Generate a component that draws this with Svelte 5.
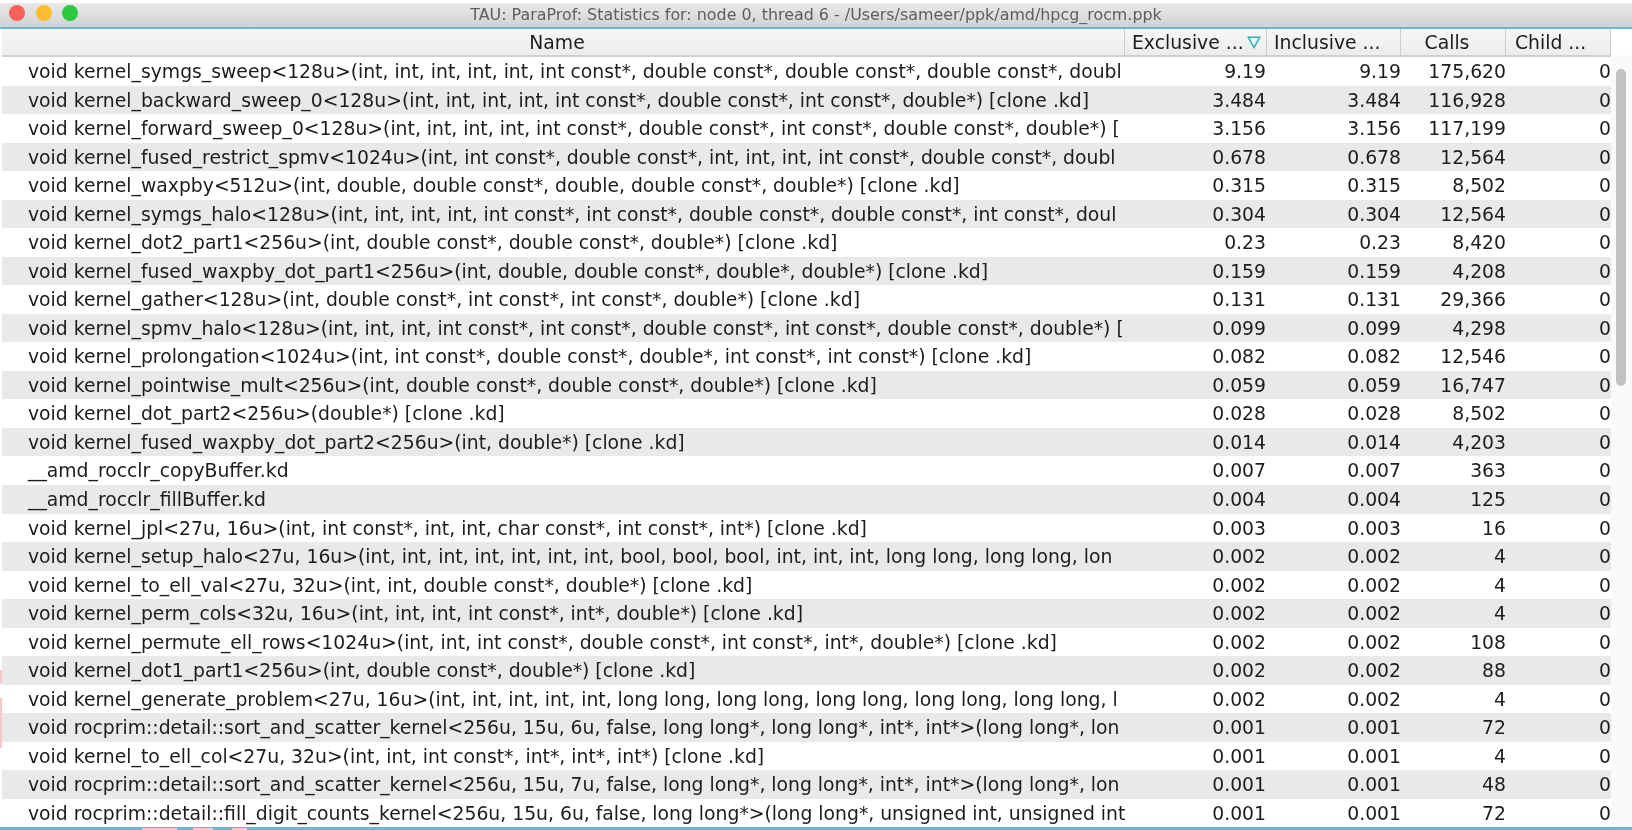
<script lang="ts">
  const rows = [
    ['void kernel_symgs_sweep<128u>(int, int, int, int, int, int const*, double const*, double const*, double const*, doubl', '9.19', '9.19', '175,620'],
    ['void kernel_backward_sweep_0<128u>(int, int, int, int, int const*, double const*, int const*, double*) [clone .kd]', '3.484', '3.484', '116,928'],
    ['void kernel_forward_sweep_0<128u>(int, int, int, int, int const*, double const*, int const*, double const*, double*) [', '3.156', '3.156', '117,199'],
    ['void kernel_fused_restrict_spmv<1024u>(int, int const*, double const*, int, int, int, int const*, double const*, doubl', '0.678', '0.678', '12,564'],
    ['void kernel_waxpby<512u>(int, double, double const*, double, double const*, double*) [clone .kd]', '0.315', '0.315', '8,502'],
    ['void kernel_symgs_halo<128u>(int, int, int, int, int const*, int const*, double const*, double const*, int const*, doul', '0.304', '0.304', '12,564'],
    ['void kernel_dot2_part1<256u>(int, double const*, double const*, double*) [clone .kd]', '0.23', '0.23', '8,420'],
    ['void kernel_fused_waxpby_dot_part1<256u>(int, double, double const*, double*, double*) [clone .kd]', '0.159', '0.159', '4,208'],
    ['void kernel_gather<128u>(int, double const*, int const*, int const*, double*) [clone .kd]', '0.131', '0.131', '29,366'],
    ['void kernel_spmv_halo<128u>(int, int, int, int const*, int const*, double const*, int const*, double const*, double*) [', '0.099', '0.099', '4,298'],
    ['void kernel_prolongation<1024u>(int, int const*, double const*, double*, int const*, int const*) [clone .kd]', '0.082', '0.082', '12,546'],
    ['void kernel_pointwise_mult<256u>(int, double const*, double const*, double*) [clone .kd]', '0.059', '0.059', '16,747'],
    ['void kernel_dot_part2<256u>(double*) [clone .kd]', '0.028', '0.028', '8,502'],
    ['void kernel_fused_waxpby_dot_part2<256u>(int, double*) [clone .kd]', '0.014', '0.014', '4,203'],
    ['__amd_rocclr_copyBuffer.kd', '0.007', '0.007', '363'],
    ['__amd_rocclr_fillBuffer.kd', '0.004', '0.004', '125'],
    ['void kernel_jpl<27u, 16u>(int, int const*, int, int, char const*, int const*, int*) [clone .kd]', '0.003', '0.003', '16'],
    ['void kernel_setup_halo<27u, 16u>(int, int, int, int, int, int, int, bool, bool, bool, int, int, int, long long, long long, lon', '0.002', '0.002', '4'],
    ['void kernel_to_ell_val<27u, 32u>(int, int, double const*, double*) [clone .kd]', '0.002', '0.002', '4'],
    ['void kernel_perm_cols<32u, 16u>(int, int, int, int const*, int*, double*) [clone .kd]', '0.002', '0.002', '4'],
    ['void kernel_permute_ell_rows<1024u>(int, int, int const*, double const*, int const*, int*, double*) [clone .kd]', '0.002', '0.002', '108'],
    ['void kernel_dot1_part1<256u>(int, double const*, double*) [clone .kd]', '0.002', '0.002', '88'],
    ['void kernel_generate_problem<27u, 16u>(int, int, int, int, int, long long, long long, long long, long long, long long, l', '0.002', '0.002', '4'],
    ['void rocprim::detail::sort_and_scatter_kernel<256u, 15u, 6u, false, long long*, long long*, int*, int*>(long long*, lon', '0.001', '0.001', '72'],
    ['void kernel_to_ell_col<27u, 32u>(int, int, int const*, int*, int*, int*) [clone .kd]', '0.001', '0.001', '4'],
    ['void rocprim::detail::sort_and_scatter_kernel<256u, 15u, 7u, false, long long*, long long*, int*, int*>(long long*, lon', '0.001', '0.001', '48'],
    ['void rocprim::detail::fill_digit_counts_kernel<256u, 15u, 6u, false, long long*>(long long*, unsigned int, unsigned int', '0.001', '0.001', '72']
  ];
</script>

<div class="window">
  <div class="titlebar">
    <div class="lights">
      <span class="light red"></span>
      <span class="light yellow"></span>
      <span class="light green"></span>
    </div>
    <div class="title">TAU: ParaProf: Statistics for: node 0, thread 6 - /Users/sameer/ppk/amd/hpcg_rocm.ppk</div>
  </div>

  <div class="table-wrap">
    <div class="table">
      <div class="row head">
        <div class="cell name center">Name</div>
        <div class="cell excl">
          <span>Exclusive ...</span>
          <svg width="14" height="13" viewBox="0 0 14 13"><path d="M1.2 1.2h11.6L7 11.6z" fill="none" stroke="#2bb5ae" stroke-width="1.5" /></svg>
        </div>
        <div class="cell incl">Inclusive ...</div>
        <div class="cell calls center">Calls</div>
        <div class="cell child">Child ...</div>
      </div>
      {#each rows as r, i}
        <div class="row" class:alt={i % 2 === 1}>
          <div class="cell name">{r[0]}</div>
          <div class="cell num excl">{r[1]}</div>
          <div class="cell num incl">{r[2]}</div>
          <div class="cell num calls">{r[3]}</div>
          <div class="cell num child">0</div>
        </div>
      {/each}
    </div>
    <div class="scroll">
      <div class="thumb"></div>
    </div>
  </div>
  <div class="bottom"></div>

  <!-- desktop showing through at the window edges -->
  <span class="peek" style="left:0;top:670px;width:2px;height:14px"></span>
  <span class="peek" style="left:0;top:698px;width:2px;height:50px"></span>
  <span class="peek" style="left:142px;top:828px;width:35px;height:2px"></span>
  <span class="peek" style="left:193px;top:828px;width:20px;height:2px"></span>
  <span class="peek" style="left:232px;top:828px;width:15px;height:2px"></span>
</div>

<style>
  :global(body) {
    margin: 0;
    background: #fff;
  }

  .window {
    width: 1632px;
    height: 830px;
    overflow: hidden;
    display: flex;
    flex-direction: column;
    position: relative;
    font-family: "DejaVu Sans", sans-serif;
    color: #1c1c1c;
    filter: blur(0.3px);
  }

  .titlebar {
    margin-top: 3px;
    height: 24px;
    flex: none;
    position: relative;
    display: flex;
    align-items: center;
    justify-content: center;
    background: linear-gradient(#e9e9e9, #d2d2d2);
    border-bottom: 2px solid #6fb2dc;
  }

  .lights {
    position: absolute;
    left: 9px;
    top: 2px;
    display: flex;
    gap: 10.5px;
  }

  .light {
    width: 16px;
    height: 16px;
    border-radius: 50%;
  }

  .red { background: #f9605a; }
  .yellow { background: #fdbc2e; }
  .green { background: #2bc840; }

  .title {
    font-size: 15.9px;
    color: #5e5e5e;
    margin-bottom: 2px;
  }

  .table-wrap {
    flex: 1;
    display: flex;
    min-height: 0;
    padding-left: 2px;
  }

  .table {
    width: 1609px;
    flex: none;
  }

  .row {
    display: flex;
    height: 28.54px;
    background: #fff;
  }

  .alt {
    background: #e9e9e9;
  }

  .head {
    height: 26px;
    background: linear-gradient(#f6f6f6, #ececec);
    border-bottom: 2px solid #cfcfcf;
  }

  .cell {
    font-size: 18.8px;
    line-height: 30px;
    white-space: nowrap;
    overflow: hidden;
    box-sizing: border-box;
  }

  .head .cell {
    line-height: 26px;
    padding-top: 1px;
    border-right: 1px solid #cdcdcd;
    display: flex;
    align-items: center;
    gap: 3px;
  }

  .name {
    width: 1123px;
    padding-left: 26px;
  }

  .excl { width: 142px; }
  .incl { width: 134px; }
  .calls { width: 105px; }
  .child { width: 105px; }

  .head .excl, .head .incl {
    padding-left: 7px;
  }

  .head .child {
    padding-left: 9px;
  }

  .head .center {
    justify-content: center;
    padding-left: 0;
  }

  .head .name {
    padding-right: 12px;
  }

  .head .calls {
    padding-right: 12px;
  }

  .num {
    text-align: right;
    padding-right: 0;
  }

  .excl.num {
    padding-right: 1px;
  }

  .child.num {
    padding-right: 0;
  }

  .scroll {
    flex: 1;
    margin-top: 26px;
    background: #fafafa;
    position: relative;
  }

  .thumb {
    position: absolute;
    left: 5px;
    top: 14px;
    width: 10px;
    height: 317px;
    border-radius: 5px;
    background: #c2c2c2;
  }

  .bottom {
    height: 3px;
    flex: none;
    background: #6fb2dc;
  }

  .peek {
    position: absolute;
    background: #f5c9c9;
  }
</style>
